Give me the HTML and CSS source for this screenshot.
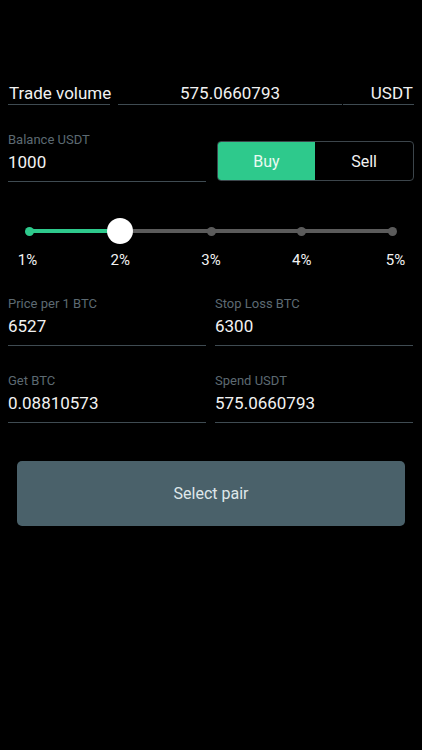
FILE: index.html
```html
<!DOCTYPE html>
<html>
<head>
<meta charset="utf-8">
<link rel="stylesheet" href="styles.css">
</head>
<body>
<div class="screen">
  <div class="volume-row">
    <div class="vol-field vol-label">Trade volume</div>
    <div class="vol-field vol-value">575.0660793</div>
    <div class="vol-field vol-unit">USDT</div>
  </div>

  <div class="row balance-row">
    <div class="field">
      <div class="label">Balance USDT</div>
      <div class="value">1000</div>
    </div>
    <div class="segmented">
      <div class="seg-btn active">Buy</div>
      <div class="seg-btn">Sell</div>
    </div>
  </div>

  <div class="slider">
    <div class="track">
      <span class="dot on"></span>
      <span class="line on"></span>
      <span class="dot"></span>
      <span class="line"></span>
      <span class="dot"></span>
      <span class="line"></span>
      <span class="dot"></span>
      <span class="line"></span>
      <span class="dot"></span>
      <span class="knob"></span>
    </div>
    <div class="ticks">
      <span class="tick">1%</span>
      <span class="tick">2%</span>
      <span class="tick">3%</span>
      <span class="tick">4%</span>
      <span class="tick">5%</span>
    </div>
  </div>

  <div class="row pair-row">
    <div class="field">
      <div class="label">Price per 1 BTC</div>
      <div class="value">6527</div>
    </div>
    <div class="field">
      <div class="label">Stop Loss BTC</div>
      <div class="value">6300</div>
    </div>
  </div>

  <div class="row pair-row second">
    <div class="field">
      <div class="label">Get BTC</div>
      <div class="value">0.08810573</div>
    </div>
    <div class="field">
      <div class="label">Spend USDT</div>
      <div class="value">575.0660793</div>
    </div>
  </div>

  <div class="action">
    <div class="select-btn">Select pair</div>
  </div>
</div>
</body>
</html>
```

FILE: styles.css
```css
* { box-sizing: border-box; }
html, body {
  margin: 0;
  padding: 0;
  background: #000;
}
body {
  font-family: "Roboto", "Liberation Sans", sans-serif;
  color: #f2f2f2;
  width: 422px;
  height: 750px;
  overflow: hidden;
}
.screen {
  padding: 82px 8px 0 8px;
}
.volume-row {
  display: flex;
  height: 23px;
}
.vol-field {
  font-size: 17px;
  line-height: 22px;
  border-bottom: 1px solid #3f4b52;
  white-space: nowrap;
}
.vol-label {
  width: 102px;
  padding-left: 1px;
}
.vol-value {
  width: 224px;
  margin-left: 8px;
  text-align: center;
}
.vol-unit {
  width: 71px;
  margin-left: 1px;
  text-align: right;
  padding-right: 1px;
}
.row {
  display: flex;
  gap: 9px;
}
.balance-row {
  margin-top: 27px;
  align-items: flex-end;
  gap: 11px;
}
.field {
  width: 198px;
  border-bottom: 1px solid #3f4b52;
  padding-bottom: 8px;
}
.label {
  font-size: 13px;
  line-height: 16px;
  color: #5d6a72;
}
.value {
  margin-top: 3px;
  font-size: 17px;
  line-height: 22px;
  color: #f2f2f2;
}
.segmented {
  display: flex;
  width: 198px;
  height: 40px;
  margin-bottom: 1px;
  border: 1px solid #3c454b;
  border-radius: 4px;
  overflow: hidden;
}
.seg-btn {
  flex: 1;
  display: flex;
  align-items: center;
  justify-content: center;
  font-size: 16px;
  color: #f2f2f2;
}
.seg-btn.active {
  background: #2ec98c;
  color: #eafaf2;
}
.slider {
  margin: 36px 0 0 17px;
  width: 372px;
}
.track {
  position: relative;
  display: flex;
  align-items: center;
  height: 26px;
}
.dot {
  width: 9px;
  height: 9px;
  border-radius: 50%;
  background: #5b5b5b;
  flex: none;
}
.dot.on { background: #2ec98c; }
.line {
  flex: 1;
  height: 4px;
  margin: 0 -1px;
  background: #5b5b5b;
}
.line.on { background: #2ec98c; }
.knob {
  position: absolute;
  left: 82px;
  top: 0;
  width: 26px;
  height: 26px;
  border-radius: 50%;
  background: #fff;
}
.ticks {
  display: flex;
  justify-content: space-between;
  margin-top: 7px;
}
.tick {
  width: 9px;
  display: flex;
  justify-content: center;
  font-size: 15px;
  line-height: 18px;
  color: #f2f2f2;
  white-space: nowrap;
}
.tick:first-child { transform: translateX(-2px); }
.tick:last-child { transform: translateX(3px); }
.pair-row {
  margin-top: 27px;
}
.action {
  margin-top: 38px;
  padding: 0 9px;
}
.select-btn {
  height: 65px;
  border-radius: 5px;
  background: #4a616a;
  display: flex;
  align-items: center;
  justify-content: center;
  font-size: 16px;
  color: #dfe7ea;
}
```
